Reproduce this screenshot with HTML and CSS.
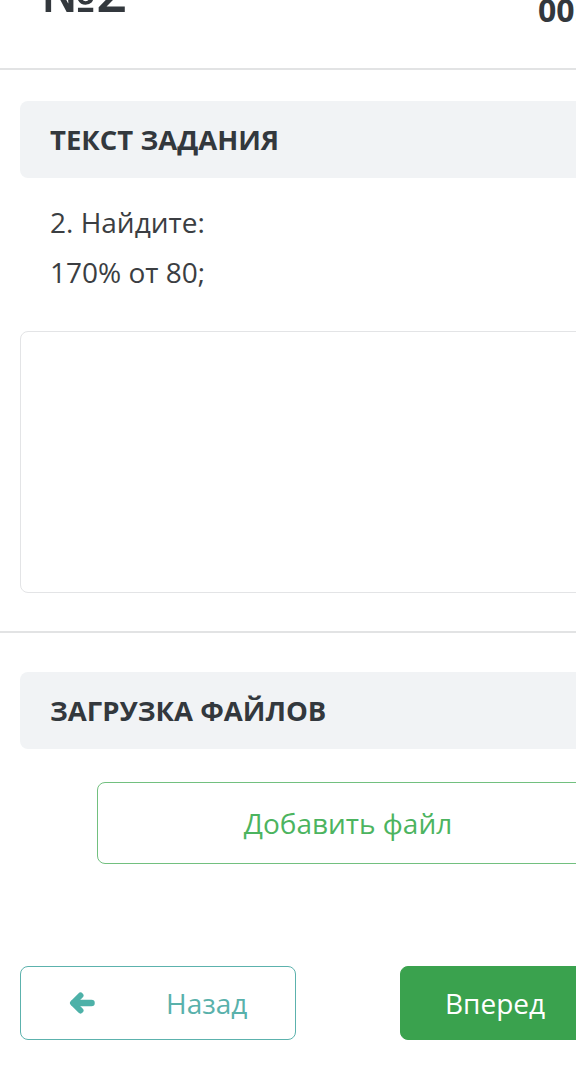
FILE: index.html
```html
<!DOCTYPE html>
<html lang="ru">
<head>
<meta charset="utf-8">
<title>Задание №2</title>
<link rel="stylesheet" href="styles.css">
</head>
<body>
<div class="page">
  <header class="top">
    <h1 class="task-no">№2</h1>
    <div class="timer">00:14:52</div>
  </header>

  <section class="block">
    <div class="block-head">ТЕКСТ ЗАДАНИЯ</div>
    <div class="task-text">
      <p>2. Найдите:</p>
      <p>170% от 80;</p>
    </div>
    <textarea class="answer"></textarea>
  </section>

  <section class="block block-files">
    <div class="block-head">ЗАГРУЗКА ФАЙЛОВ</div>
    <div class="upload-row">
      <button class="btn-upload" type="button">Добавить файл</button>
    </div>
  </section>

  <nav class="nav">
    <button class="btn btn-back" type="button">
      <svg class="ico" width="26" height="22" viewBox="0 0 26 22" aria-hidden="true">
        <polyline points="11.5,3.5 4,11 11.5,18.5" fill="none" stroke="currentColor" stroke-width="6" stroke-linecap="round" stroke-linejoin="round"/>
        <line x1="5" y1="11" x2="22.5" y2="11" stroke="currentColor" stroke-width="6.5" stroke-linecap="round"/>
      </svg>
      <span>Назад</span>
    </button>
    <button class="btn btn-next" type="button">
      <span>Вперед</span>
      <svg class="ico" width="26" height="22" viewBox="0 0 26 22" aria-hidden="true">
        <polyline points="14.5,3.5 22,11 14.5,18.5" fill="none" stroke="currentColor" stroke-width="6" stroke-linecap="round" stroke-linejoin="round"/>
        <line x1="21" y1="11" x2="3.5" y2="11" stroke="currentColor" stroke-width="6.5" stroke-linecap="round"/>
      </svg>
    </button>
  </nav>
</div>
</body>
</html>
```

FILE: styles.css
```css
html, body {
  margin: 0;
  padding: 0;
  background: #ffffff;
  overflow: hidden;
}

body {
  font-family: "Open Sans", "Noto Sans", "DejaVu Sans", sans-serif;
  color: #3b3e42;
  width: 576px;
  height: 1080px;
}

.page {
  width: 696px;
}

.top {
  height: 68px;
  border-bottom: 2px solid #e2e3e4;
  display: flex;
  justify-content: space-between;
  align-items: flex-start;
  padding: 0 30px 0 41px;
}

.task-no {
  margin: -36px 0 0 0;
  font-size: 54px;
  line-height: 54px;
  font-weight: 600;
  color: #33383d;
}

.timer {
  margin-top: -6px;
  font-size: 32px;
  line-height: 32px;
  font-weight: 700;
  color: #33383d;
}

.block {
  padding: 31px 20px 0 20px;
}

.block-head {
  height: 77px;
  background: #f1f3f5;
  border-radius: 8px;
  padding-left: 30px;
  display: flex;
  align-items: center;
  font-size: 27.5px;
  font-weight: 700;
  color: #33383d;
}

.task-text {
  margin-top: 19px;
  padding-left: 30px;
}

.task-text p {
  margin: 0;
  font-size: 28px;
  line-height: 50px;
  color: #3b3e42;
}

.answer {
  display: block;
  box-sizing: border-box;
  margin-top: 34px;
  width: 100%;
  height: 262px;
  border: 1px solid #e3e4e6;
  border-radius: 8px;
  background: #ffffff;
  resize: none;
  outline: none;
}

.block-files {
  margin-top: 38px;
  border-top: 2px solid #e2e3e4;
  padding-top: 39px;
}

.upload-row {
  display: flex;
  justify-content: center;
  margin-top: 33px;
}

.btn-upload {
  width: 502px;
  height: 82px;
  box-sizing: border-box;
  border: 1px solid #72c07f;
  border-radius: 8px;
  background: #ffffff;
  font-family: inherit;
  font-size: 28px;
  color: #4cb45f;
}

.nav {
  display: flex;
  justify-content: space-between;
  padding: 0 20px;
  margin-top: 102px;
}

.btn {
  width: 276px;
  height: 74px;
  box-sizing: border-box;
  border-radius: 8px;
  font-family: inherit;
  font-size: 28px;
  display: flex;
  align-items: center;
  gap: 71px;
  padding: 0 0 0 48px;
}

.btn-back {
  background: #ffffff;
  border: 1px solid #5cb2ad;
  color: #59b1ab;
}

.btn-back .ico {
  color: #4db1a8;
}

.btn-next {
  background: #3aa24e;
  border: 1px solid #3aa24e;
  color: #ffffff;
  padding-left: 44px;
}

.ico {
  flex: none;
}
```
